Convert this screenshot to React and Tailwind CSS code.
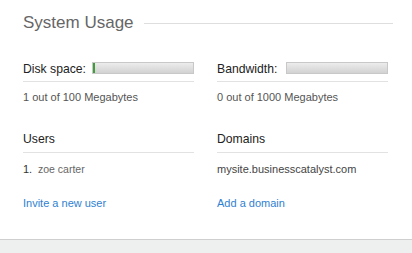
const Bar = ({ value = 0 }) => (
  <div className="ml-auto mt-[1px] h-[12px] w-[102px] border border-[#c8c8c8] bg-gradient-to-b from-[#ececec] to-[#d2d2d2] flex">
    {value > 0 && <div className="h-full w-[2px] bg-[#3f9e3a]" />}
  </div>
);

const Column = ({ label, bar, usage, heading, item, numbered, link }) => (
  <div className="w-[171px] flex flex-col">
    <div className="flex h-[16px] leading-[16px] text-[12.2px] text-[#222]">
      <span>{label}</span>
      <Bar value={bar} />
    </div>
    <div className="mt-[4px] border-b border-[#e2e2e2]" />
    <p className="mt-[8px] text-[11px] leading-[14px] text-[#555]">{usage}</p>
    <h3 className="mt-[27px] text-[12.2px] leading-[16px] text-[#222]">{heading}</h3>
    <div className="mt-[5px] border-b border-[#e2e2e2]" />
    <div className="mt-[9px] flex text-[11px] leading-[14px]">
      {numbered && <span className="w-[15px] text-[#333]">1.</span>}
      <span className={numbered ? "text-[#666] text-[10.5px]" : "text-[#444]"}>{item}</span>
    </div>
    <a href="#" className="mt-[20px] text-[11px] leading-[14px] text-[#2f7fd1]">{link}</a>
  </div>
);

export default function App() {
  return (
    <div className="w-[412px] h-[253px] flex flex-col bg-[#eef0f0] font-['Liberation_Sans',Arial,sans-serif]">
      <div className="h-[240px] bg-white border-b border-[#cfcfcf] px-[23px] pt-[12px]">
        <div className="flex items-center gap-[10px] h-[22px]">
          <h2 className="text-[17px] leading-[22px] text-[#666]">System Usage</h2>
          <div className="flex-1 mr-[-4px] border-t border-[#dedede]" />
        </div>
        <div className="mt-[27px] flex gap-[23px]">
          <Column
            label="Disk space:"
            bar={1}
            usage="1 out of 100 Megabytes"
            heading="Users"
            item="zoe carter"
            numbered
            link="Invite a new user"
          />
          <Column
            label="Bandwidth:"
            bar={0}
            usage="0 out of 1000 Megabytes"
            heading="Domains"
            item="mysite.businesscatalyst.com"
            link="Add a domain"
          />
        </div>
      </div>
    </div>
  );
}
